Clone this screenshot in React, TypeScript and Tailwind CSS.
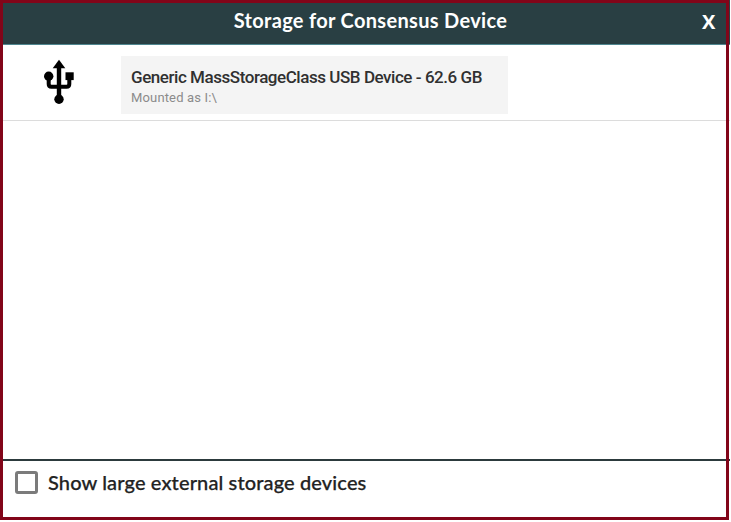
function UsbIcon() {
  return (
    <svg className="h-[46px] w-[32px]" viewBox="0 0 32 46" fill="#000">
      <path d="M16 1.700L22.300 10.300H9.700z" />
      <path d="M16 9v29" fill="none" stroke="#000" strokeWidth="4.400" />
      <path d="M5.700 19v7q0 2.700 2.700 2.700h15.200q2.700 0 2.700-2.700v-6" fill="none" stroke="#000" strokeWidth="4" />
      <circle cx="5.700" cy="18.200" r="4.700" />
      <rect x="22.500" y="14.300" width="8.200" height="7.800" />
      <circle cx="16" cy="41.200" r="4.700" />
    </svg>
  );
}

export default function App() {
  return (
    <div className="relative flex h-[522px] w-[731px] flex-col overflow-hidden bg-white font-['Lato',sans-serif]">
      <header className="flex h-[45px] w-[730px] shrink-0 items-center border-b border-[#4f868f] bg-[#293f43] pb-1 text-white">
        <h1 className="w-full pl-[11px] text-center text-[20px] font-bold leading-6 tracking-[0.32px]">
          Storage for Consensus Device
        </h1>
        <button className="-ml-[28px] mt-[3px] w-[28px] pr-[15px] font-['Open_Sans',sans-serif] text-[20px] font-bold leading-6">X</button>
      </header>
      <main className="flex h-[414px] w-[730px] shrink-0 flex-col">
        <div className="flex h-[76px] items-start border-b border-[#dcdcdc] pl-[43px] pt-[11px]">
          <div className="mt-[2px]">
            <UsbIcon />
          </div>
          <div className="ml-[46px] flex h-[58px] w-[387px] flex-col bg-[#f4f4f4] pl-[10px] pt-[11px] font-['Roboto',sans-serif]">
            <span className="whitespace-nowrap text-[17px] font-medium leading-5 tracking-[-0.45px] text-[#303030]">
              Generic MassStorageClass USB Device - 62.6 GB
            </span>
            <span className="text-[13px] leading-[21px] tracking-[0.15px] text-[#8b8b8b]">Mounted as I:\</span>
          </div>
        </div>
      </main>
      <footer className="flex h-[61px] w-[730px] items-start border-t-2 border-[#2c3a3d] pl-[15px] pt-[10px]">
        <span className="h-[23px] w-[23px] rounded-[3px] border-[3px] border-[#7b7b7b]" />
        <span className="-mt-px ml-[10px] whitespace-nowrap text-[20px] font-medium leading-6 tracking-[0.13px] text-[#222] [-webkit-text-stroke:0.25px_#222]">
          Show large external storage devices
        </span>
      </footer>
      <div className="pointer-events-none absolute left-0 top-0 h-[520px] w-[729px] border-[3px] border-[#820519]" />
    </div>
  );
}
